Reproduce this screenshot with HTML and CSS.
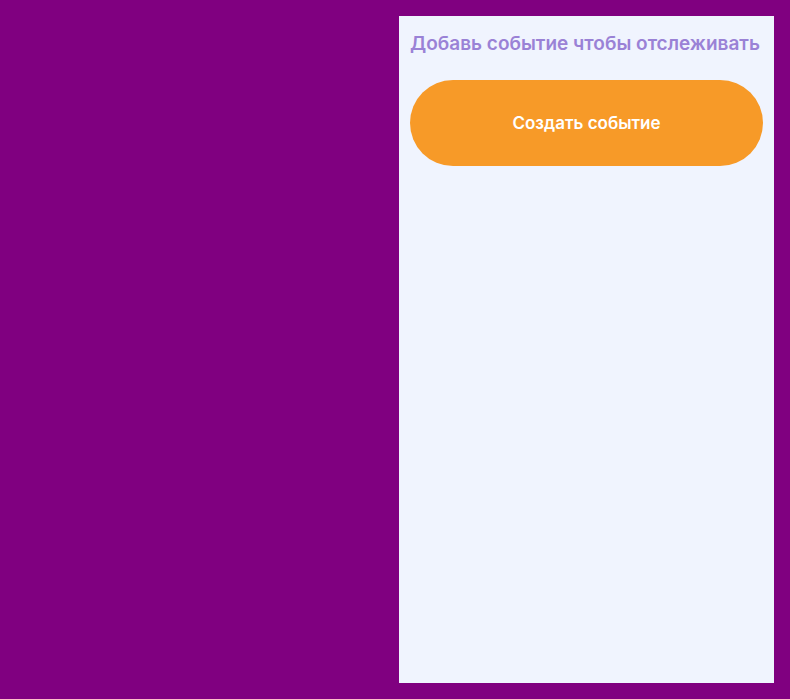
FILE: index.html
```html
<!DOCTYPE html>
<html lang="ru">
<head>
<meta charset="utf-8">
<title>События</title>
<link rel="stylesheet" href="styles.css">
</head>
<body>
  <div class="screen">
    <h1 class="title">Добавь событие чтобы отслеживать</h1>
    <button class="create-btn" type="button">Создать событие</button>
  </div>
</body>
</html>
```

FILE: styles.css
```css
html, body {
  margin: 0;
  padding: 0;
}
body {
  background: #800080;
  display: flex;
  justify-content: flex-end;
  padding: 16px;
  min-height: 100vh;
  box-sizing: border-box;
  font-family: Inter, "Noto Sans", "DejaVu Sans", sans-serif;
}
.screen {
  width: 375px;
  height: 667px;
  background: #f0f4fe;
  box-sizing: border-box;
  padding: 16px 11px;
  display: flex;
  flex-direction: column;
}
.title {
  margin: 0;
  font-size: 19px;
  line-height: 24px;
  font-weight: 600;
  color: #9a82d6;
  white-space: nowrap;
}
.create-btn {
  margin-top: 24px;
  height: 86px;
  width: 100%;
  border: none;
  border-radius: 43px;
  background: #f79a28;
  color: #fff;
  font-family: inherit;
  font-size: 17px;
  font-weight: 600;
  cursor: pointer;
}
```
